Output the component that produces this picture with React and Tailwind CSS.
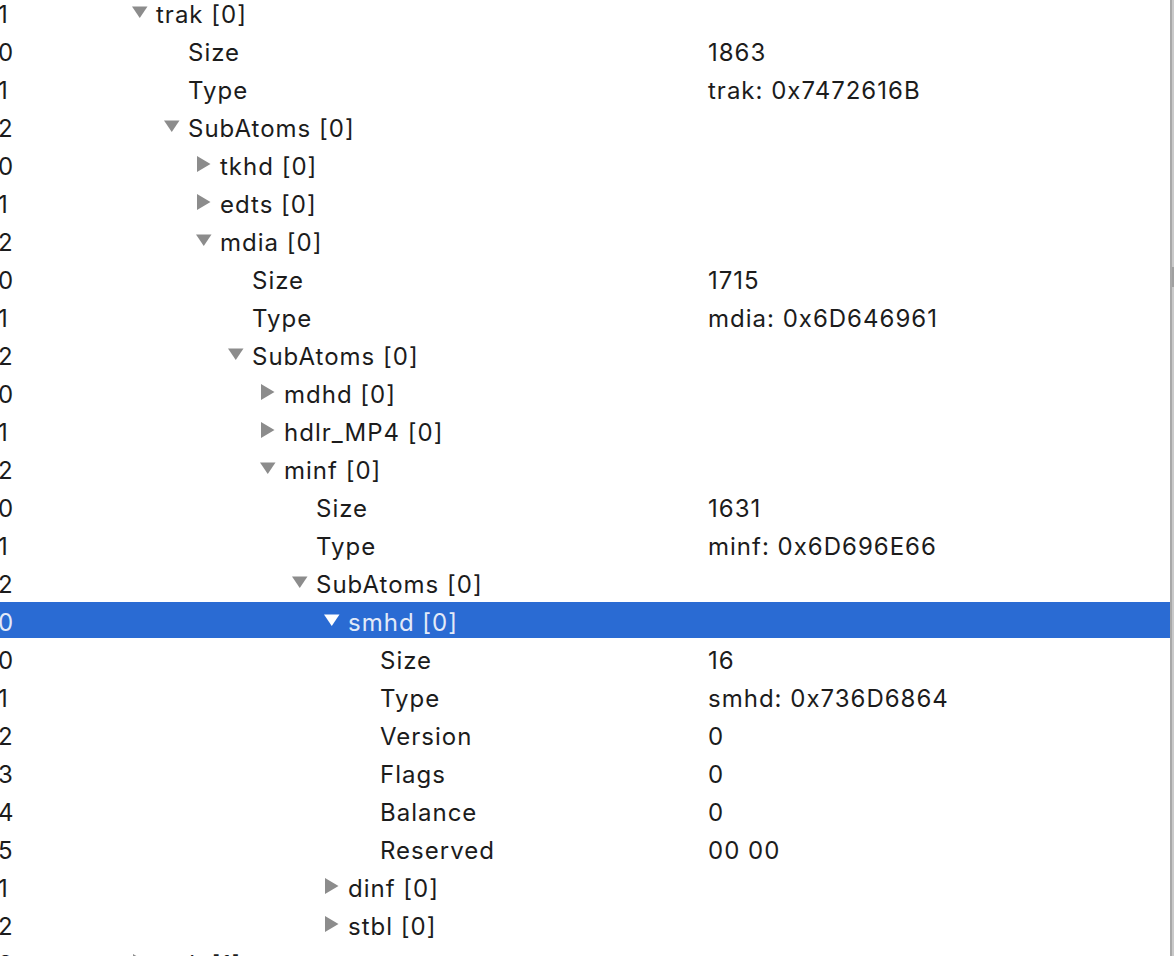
const rows = [
  { idx: '1', level: 0, name: 'trak [0]', node: 'open' },
  { idx: '0', level: 1, name: 'Size', value: '1863' },
  { idx: '1', level: 1, name: 'Type', value: 'trak: 0x7472616B' },
  { idx: '2', level: 1, name: 'SubAtoms [0]', node: 'open' },
  { idx: '0', level: 2, name: 'tkhd [0]', node: 'closed' },
  { idx: '1', level: 2, name: 'edts [0]', node: 'closed' },
  { idx: '2', level: 2, name: 'mdia [0]', node: 'open' },
  { idx: '0', level: 3, name: 'Size', value: '1715' },
  { idx: '1', level: 3, name: 'Type', value: 'mdia: 0x6D646961' },
  { idx: '2', level: 3, name: 'SubAtoms [0]', node: 'open' },
  { idx: '0', level: 4, name: 'mdhd [0]', node: 'closed' },
  { idx: '1', level: 4, name: 'hdlr_MP4 [0]', node: 'closed' },
  { idx: '2', level: 4, name: 'minf [0]', node: 'open' },
  { idx: '0', level: 5, name: 'Size', value: '1631' },
  { idx: '1', level: 5, name: 'Type', value: 'minf: 0x6D696E66' },
  { idx: '2', level: 5, name: 'SubAtoms [0]', node: 'open' },
  { idx: '0', level: 6, name: 'smhd [0]', node: 'open', selected: true },
  { idx: '0', level: 7, name: 'Size', value: '16' },
  { idx: '1', level: 7, name: 'Type', value: 'smhd: 0x736D6864' },
  { idx: '2', level: 7, name: 'Version', value: '0' },
  { idx: '3', level: 7, name: 'Flags', value: '0' },
  { idx: '4', level: 7, name: 'Balance', value: '0' },
  { idx: '5', level: 7, name: 'Reserved', value: '00 00' },
  { idx: '1', level: 6, name: 'dinf [0]', node: 'closed' },
  { idx: '2', level: 6, name: 'stbl [0]', node: 'closed' },
  { idx: '3', level: 0, name: 'trak [1]', node: 'closed' },
]

// disclosure triangles
function Disclosure({ open, selected }) {
  const fill = selected ? '#ffffff' : '#8c8c8c'
  return (
    <svg width="16" height="16" viewBox="0 0 16 16" className="shrink-0">
      {open ? <polygon points="0,2.5 15.5,2.5 7.75,14" fill={fill} /> : <polygon points="1,0 14.5,8 1,16" fill={fill} />}
    </svg>
  )
}

function Row({ row }) {
  const sel = row.selected
  return (
    <div className="h-[38px] shrink-0">
      <div className={`flex h-[36px] items-center ${sel ? 'bg-[#2a6bd3] text-[#e3eaf8]' : 'text-[#1c1c1c]'}`}>
        <span className="-ml-[2px] w-[42px] shrink-0 pt-[5px]">{row.idx}</span>
        <div className="flex w-[668px] shrink-0 items-center" style={{ paddingLeft: 92 + 32 * row.level }}>
          <span className="flex w-[24px] shrink-0 items-center">
            {row.node && <Disclosure open={row.node === 'open'} selected={sel} />}
          </span>
          <span className="whitespace-nowrap pt-[5px]">{row.name}</span>
        </div>
        <span className="whitespace-nowrap pt-[5px]">{row.value}</span>
      </div>
    </div>
  )
}

export default function App() {
  return (
    <div className="flex h-[956px] w-[1174px] overflow-hidden bg-white text-[24px] leading-none tracking-[1px]" style={{ fontFamily: 'Inter, "Noto Sans", sans-serif' }}>
      <div className="flex min-w-0 flex-1 flex-col -mt-[6px]">
        {rows.map((r, i) => (
          <Row key={i} row={r} />
        ))}
      </div>
      <div className="flex w-[4px] shrink-0 flex-col border-l-2 border-[#a8a8a8] bg-[#c9c9c9]">
        <div className="h-[267px] shrink-0" />
        <div className="h-[20px] shrink-0 bg-[#a0a0a0]" />
      </div>
    </div>
  )
}
